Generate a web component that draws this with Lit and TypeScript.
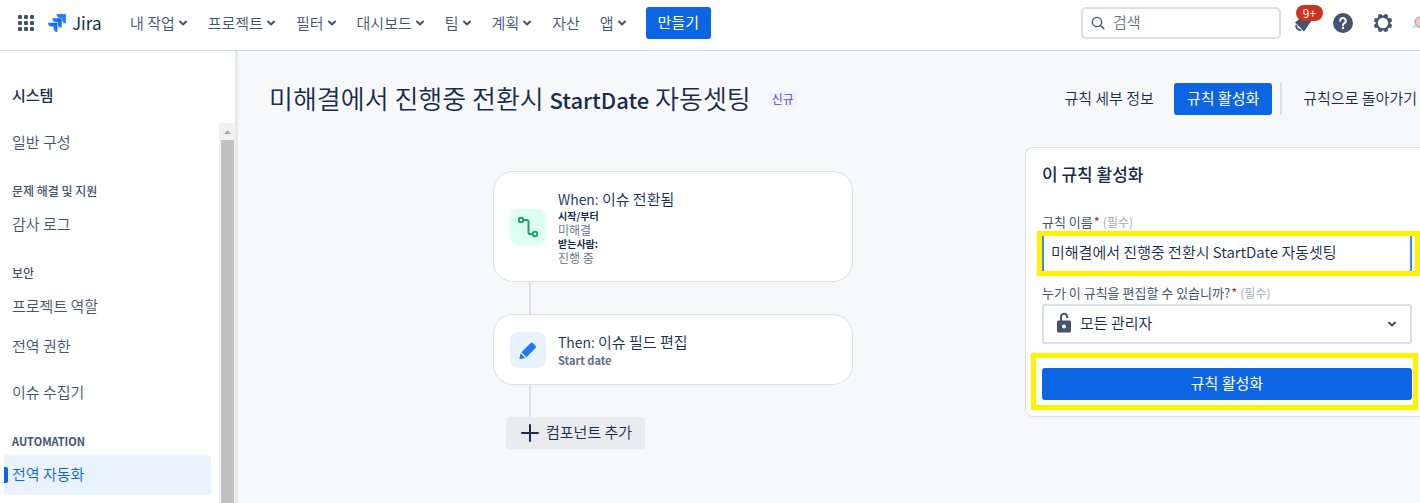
import { LitElement, html, css, svg } from "lit";
import { customElement } from "lit/decorators.js";

const chevron = html`<svg class="chev" viewBox="0 0 10 10" aria-hidden="true"><path d="M2 3.5 5 6.5 8 3.5" fill="none" stroke="currentColor" stroke-width="2" stroke-linecap="round" stroke-linejoin="round"/></svg>`;

const menus: { label: string; menu: boolean }[] = [
  { label: "내 작업", menu: true },
  { label: "프로젝트", menu: true },
  { label: "필터", menu: true },
  { label: "대시보드", menu: true },
  { label: "팀", menu: true },
  { label: "계획", menu: true },
  { label: "자산", menu: false },
  { label: "앱", menu: true },
];

@customElement("top-bar")
class TopBar extends LitElement {
  static styles = css`
    :host { display: block; }
    .bar { display: flex; align-items: center; height: 50px; padding-left: 16px; background: #fff; border-bottom: 1px solid #d8dbe3; box-sizing: content-box; color: #44546f; overflow: hidden; }
    .bar > * { flex: none; }
    button { font: inherit; color: inherit; background: none; border: 0; padding: 0; margin: 0; display: flex; align-items: center; justify-content: center; cursor: pointer; }
    .apps { width: 20px; height: 20px; margin-bottom: 4px; }
    .apps svg { width: 16px; height: 16px; }
    .logo { display: flex; align-items: center; gap: 6px; width: 52px; margin-left: 12px; margin-bottom: 4px; color: #172b4d; text-decoration: none; font-size: 17px; line-height: 24px; font-weight: 400; }
    .logo svg { width: 18px; height: 18px; flex: none; }
    nav { display: flex; align-items: center; gap: 20px; margin-left: 30px; margin-bottom: 4px; }
    nav button { gap: 3px; font-size: 15px; line-height: 32px; }
    .chev { width: 10px; height: 10px; }
    .bar .create { background: #0c66e4; color: #fff; border-radius: 3px; height: 32px; padding: 0 12px 3px; font-size: 15px; font-weight: 400; margin-left: 19px; margin-bottom: 4px; }
    .search { display: flex; align-items: center; gap: 8px; box-sizing: border-box; width: 200px; height: 32px; margin-left: auto; margin-bottom: 4px; border: 2px solid #dcdfe4; border-radius: 5px; padding: 0 8px; }
    .search svg { width: 14px; height: 14px; flex: none; }
    .search input { border: 0; outline: 0; padding: 0 0 2px; min-width: 0; flex: 1; font: inherit; font-size: 15px; line-height: 24px; background: none; color: #172b4d; }
    .search input::placeholder { color: #626f86; opacity: 1; }
    .tools { display: flex; align-items: center; margin-left: 10px; margin-bottom: 4px; }
    .tool { width: 24px; height: 24px; position: relative; margin-right: 16px; }
    .tool svg { width: 24px; height: 24px; }
    .count { position: absolute; left: 5px; top: -6px; width: 27px; height: 16px; border-radius: 8px; background: #ca3521; color: #fff; font-size: 12px; line-height: 16px; font-weight: 400; text-align: center; }
    .user { width: 9px; height: 24px; overflow: hidden; justify-content: flex-start; }
    .user svg { width: 24px; height: 24px; flex: none; }
  `;
  render() {
    return html`<header class="bar">
      <button class="apps" aria-label="앱 전환기"><svg viewBox="0 0 16 16" fill="currentColor">
        ${[0, 6, 12].map((y) => [0, 6, 12].map((x) => svg`<rect x=${x} y=${y} width="4" height="4" rx="1"/>`))}
      </svg></button>
      <a class="logo" href="#"><svg viewBox="0 0 24 24" aria-hidden="true">
        <defs>
          <linearGradient id="a" x1="1" y1="0" x2="0.4" y2="0.6"><stop offset="0.1" stop-color="#0c5fe0"/><stop offset="1" stop-color="#2684ff"/></linearGradient>
        </defs>
        <path fill="url(#a)" d="M11.571 11.513H0a5.218 5.218 0 0 0 5.232 5.215h2.130v2.057A5.215 5.215 0 0 0 12.575 24V12.518a1.005 1.005 0 0 0-1.005-1.005z"/>
        <path fill="url(#a)" d="M17.294 5.757H5.736a5.215 5.215 0 0 0 5.215 5.214h2.129v2.058a5.218 5.218 0 0 0 5.215 5.214V6.758a1.001 1.001 0 0 0-1.001-1.001z"/>
        <path fill="#2684ff" d="M23.013 0H11.455a5.215 5.215 0 0 0 5.215 5.215h2.129v2.057A5.215 5.215 0 0 0 24 12.483V1.005A1.001 1.001 0 0 0 23.013 0Z"/>
      </svg><span>Jira</span></a>
      <nav>${menus.map((m) => html`<button>${m.label}${m.menu ? chevron : ""}</button>`)}</nav>
      <button class="create">만들기</button>
      <label class="search">
        <svg viewBox="0 0 14 14" fill="none" stroke="#44546f" stroke-width="1.4" stroke-linecap="round" aria-hidden="true"><circle cx="6" cy="6" r="4.6"/><path d="m9.6 9.6 3.2 3.2"/></svg>
        <input type="text" placeholder="검색" aria-label="검색">
      </label>
      <div class="tools">
        <button class="tool" aria-label="알림"><svg viewBox="0 0 24 24" fill="currentColor"><path d="M4 11.500 12 5l9 4-8 11.500z"/><path d="M5.200 14.800a4.500 4.500 0 0 0 4 4.200" fill="none" stroke="currentColor" stroke-width="2" stroke-linecap="round"/></svg><span class="count">9+</span></button>
        <button class="tool" aria-label="도움말"><svg viewBox="0 0 24 24"><circle cx="12" cy="12" r="10" fill="currentColor"/><path d="M9.200 9.800a2.800 2.800 0 1 1 4.200 2.400c-.9.5-1.400 1-1.400 2" fill="none" stroke="#fff" stroke-width="2" stroke-linecap="round"/><circle cx="12" cy="17" r="1.200" fill="#fff"/></svg></button>
        <button class="tool" aria-label="설정"><svg viewBox="0 0 24 24"><circle cx="12" cy="12" r="6.300" fill="none" stroke="currentColor" stroke-width="2.200"/>
          ${[0, 45, 90, 135, 180, 225, 270, 315].map((r) => svg`<path fill="currentColor" transform="rotate(${r + 22.5} 12 12)" d="M9.600 5.800 10.400 2.700h3.200l.8 3.100z"/>`)}
        </svg></button>
        <button class="user" aria-label="프로필"><svg viewBox="0 0 24 24"><path d="M2 14h9v3H1z" fill="#c9efea"/><circle cx="9" cy="11" r="5" fill="#f6c5c9" stroke="#b98a94"/></svg></button>
      </div>
    </header>`;
  }
}

const groups: { title?: string; latin?: boolean; items: string[][] }[] = [
  { items: [["일반 구성"]] },
  { title: "문제 해결 및 지원", items: [["감사 로그"]] },
  { title: "보안", items: [["프로젝트 역할", "전역 권한"], ["이슈 수집기"]] },
  { title: "AUTOMATION", latin: true, items: [["전역 자동화"]] },
];

@customElement("side-nav")
class SideNav extends LitElement {
  static styles = css`
    :host { display: flex; flex-direction: column; flex: none; width: 235px; background: #fff; border-right: 3px solid #e6e8ec; overflow: hidden; }
    h2 { margin: 0; padding: 31px 12px 16px; font-size: 15px; line-height: 25px; font-weight: 500; color: #172b4d; }
    .body { display: flex; flex: 1; min-height: 0; }
    .list { flex: 1; padding: 0 8px 0 4px; overflow: hidden; }
    h3 { margin: 18px 0 4px; padding-left: 8px; font-size: 12px; line-height: 20px; font-weight: 500; color: #44546f; }
    .latin { font-size: 11px; font-weight: 700; }
    .block + .block { margin-top: 6px; }
    a { display: flex; align-items: center; box-sizing: border-box; height: 40px; padding: 0 8px 3px; border-radius: 3px; font-size: 15px; color: #44546f; text-decoration: none; position: relative; }
    .current { background: #e9f2ff; color: #0c66e4; }
    .current::before { content: ""; position: absolute; left: 0; top: 12px; width: 4px; height: 16px; background: #0c66e4; border-radius: 0 2px 2px 0; }
    .track { width: 16px; background: #f1f1f1; display: flex; flex-direction: column; }
    .track svg { width: 16px; height: 17px; }
    .thumb { flex: 1; margin: 0 1px 0 2px; background: #c1c1c1; }
  `;
  render() {
    return html`<h2>시스템</h2>
      <div class="body">
        <nav class="list">${groups.map((g) => html`
          ${g.title ? html`<h3 class=${g.latin ? "latin" : ""}>${g.title}</h3>` : ""}
          ${g.items.map((b) => html`<div class="block">${b.map((t) => html`<a href="#" class=${t === "전역 자동화" ? "current" : ""}>${t}</a>`)}</div>`)}`)}
        </nav>
        <div class="track"><svg viewBox="0 0 16 17" aria-hidden="true"><path d="M5 11 8.500 7.500 12 11z" fill="#a3a3a3"/></svg><div class="thumb"></div></div>
      </div>`;
  }
}

@customElement("rule-flow")
class RuleFlow extends LitElement {
  static styles = css`
    :host { display: flex; justify-content: center; flex: 1; padding: 24px 0 0 83px; }
    .chain { width: 360px; }
    .card { box-sizing: border-box; display: flex; align-items: center; gap: 12px; padding: 16px; background: #fff; border: 1px solid #dcdfe4; border-radius: 20px; color: #626f86; font-size: 12px; line-height: 14px; }
    .badge { width: 36px; height: 36px; border-radius: 8px; display: flex; align-items: center; justify-content: center; flex: none; }
    .badge svg { width: 24px; height: 24px; }
    .green { background: #dcfff1; color: #22a06b; }
    .blue { background: #e9f2ff; color: #1d7afc; }
    h4 { margin: 0; font-size: 15px; line-height: 21px; font-weight: 350; color: #172b4d; }
    .kind { font-size: 14px; line-height: 14px; }
    dl, dd, dt { margin: 0; }
    dt { font-size: 10px; font-weight: 700; color: #172b4d; }
    p { margin: 0; font-size: 11px; line-height: 16px; font-weight: 700; }
    .link { width: 2px; height: 32px; margin-left: 36px; background: #dcdfe4; }
    .add { display: flex; align-items: center; gap: 7px; height: 32px; padding: 0 13px 0 15px; margin-left: 13px; border: 0; border-radius: 3px; background: #e9ebee; color: #172b4d; font: inherit; font-size: 15px; cursor: pointer; }
    .add svg { width: 18px; height: 18px; }
    .add span { padding-bottom: 3px; }
  `;
  render() {
    return html`<div class="chain">
      <article class="card"><span class="badge green"><svg viewBox="0 0 24 24" fill="none" stroke="currentColor" stroke-width="2" aria-hidden="true"><circle cx="5" cy="5" r="2.200"/><circle cx="19" cy="19" r="2.200"/><path d="M7.200 5H11a1.500 1.500 0 0 1 1.500 1.500v11A1.500 1.500 0 0 0 14 19h2.800"/></svg></span>
        <div><h4><span class="kind">When:</span> 이슈 전환됨</h4><dl><dt>시작/부터</dt><dd>미해결</dd><dt>받는사람:</dt><dd>진행 중</dd></dl></div></article>
      <div class="link"></div>
      <article class="card"><span class="badge blue"><svg viewBox="0 0 24 24" fill="currentColor" aria-hidden="true"><path d="m5.400 14.200 9-9a2 2 0 0 1 2.800 0l2.200 2.200a2 2 0 0 1 0 2.800l-9 9zM4.600 15.300l4.700 4.700-5 1a.7.7 0 0 1-.8-.8z"/></svg></span>
        <div><h4><span class="kind">Then:</span> 이슈 필드 편집</h4><p>Start date</p></div></article>
      <div class="link"></div>
      <button class="add"><svg viewBox="0 0 18 18" aria-hidden="true"><path d="M9 1v16M1 9h16" stroke="currentColor" stroke-width="2" stroke-linecap="round"/></svg><span>컴포넌트 추가</span></button>
    </div>`;
  }
}

@customElement("enable-panel")
class EnablePanel extends LitElement {
  static styles = css`
    :host { display: block; flex: none; box-sizing: border-box; width: 395px; padding: 12px 8px 16px 16px; background: #fff; border: 1px solid #dcdfe4; border-right: 0; border-radius: 8px 0 0 8px; }
    h2 { margin: 0; font-size: 17px; line-height: 28px; font-weight: 500; color: #172b4d; }
    label { display: block; font-size: 13px; line-height: 16px; font-weight: 400; color: #44546f; }
    .star { color: #ae2e24; margin: 0 3px 0 1px; }
    .hint { color: #a5adba; font-size: 12px; }
    .name { margin-top: 26px; }
    .owner { margin-top: 12px; }
    .box { position: relative; margin-top: 3px; }
    input, select { display: block; box-sizing: border-box; width: 100%; height: 40px; margin: 0; border: 2px solid #388bff; border-radius: 3px; background: #fff; padding: 0 7px 3px; font: inherit; font-size: 15px; color: #172b4d; outline: 0; }
    select { appearance: none; border-color: #dcdfe4; padding: 0 36px 3px; }
    .mark { position: absolute; border: 5px solid #fff200; pointer-events: none; }
    .mark-name { inset: -2px -8px -3px -5px; }
    .mark-go { inset: -15px -6px -10px -11px; }
    .lock { position: absolute; left: 10px; top: 7px; width: 24px; height: 24px; color: #44546f; pointer-events: none; }
    .arrow { position: absolute; right: 15px; top: 15px; width: 10px; height: 10px; color: #44546f; pointer-events: none; }
    .go { position: relative; margin-top: 24px; }
    button { width: 100%; height: 32px; border: 0; border-radius: 3px; background: #0c66e4; color: #fff; font: inherit; font-size: 15px; font-weight: 400; display: block; padding: 0 0 3px; cursor: pointer; }
  `;
  render() {
    return html`<h2>이 규칙 활성화</h2>
      <label class="name" for="name">규칙 이름<span class="star">*</span><span class="hint">(필수)</span></label>
      <div class="box"><input id="name" type="text" .value=${"미해결에서 진행중 전환시 StartDate 자동셋팅"}><div class="mark mark-name"></div></div>
      <label class="owner" for="owner">누가 이 규칙을 편집할 수 있습니까?<span class="star">*</span><span class="hint">(필수)</span></label>
      <div class="box"><select id="owner"><option>모든 관리자</option></select>
        <svg class="lock" viewBox="0 0 24 24" aria-hidden="true"><rect x="5" y="9.500" width="14" height="12" rx="1.500" fill="currentColor"/><circle cx="12" cy="15.500" r="2" fill="#fff"/><path d="M9 10V6a3.100 3.100 0 0 1 6.200-.3V7" fill="none" stroke="currentColor" stroke-width="2"/></svg>
        <svg class="arrow" viewBox="0 0 10 10" aria-hidden="true"><path d="M2 3.500 5 6.500 8 3.500" fill="none" stroke="currentColor" stroke-width="2" stroke-linecap="round" stroke-linejoin="round"/></svg></div>
      <div class="go"><button>규칙 활성화</button><div class="mark mark-go"></div></div>`;
  }
}

@customElement("app-root")
class AppRoot extends LitElement {
  static styles = css`
    :host { display: flex; flex-direction: column; height: 100vh; overflow: hidden; background: #f7f8f9; font-family: "Noto Sans CJK KR", "Noto Sans", sans-serif; font-size: 15px; font-weight: 350; color: #172b4d; }
    top-bar { flex: none; }
    .page { display: flex; flex: 1; min-height: 0; }
    main { flex: 1; min-width: 0; }
    .head { display: flex; align-items: center; height: 32px; padding: 32px 3px 32px 31px; }
    h1 { margin: 0; padding-bottom: 2px; font-size: 26px; line-height: 30px; font-weight: 350; white-space: nowrap; }
    h1 b { font-size: 22px; font-weight: 500; }
    .new { margin-left: 17px; padding: 0 4px; border-radius: 3px; background: #f3f0ff; color: #5e4db2; font-size: 12px; line-height: 16px; font-weight: 400; }
    .actions { display: flex; align-items: center; margin-left: auto; white-space: nowrap; }
    button { height: 32px; border: 0; padding: 0 0 3px; background: none; color: inherit; font: inherit; font-size: 15px; cursor: pointer; }
    .actions .primary { background: #0c66e4; color: #fff; font-weight: 400; border-radius: 3px; padding: 0 13px 3px; margin: 0 8px 0 20px; }
    .bar { width: 2px; height: 32px; background: #dcdfe4; margin-right: 21px; }
    .work { display: flex; align-items: flex-start; }
  `;
  render() {
    return html`<top-bar></top-bar>
      <div class="page">
        <side-nav></side-nav>
        <main>
          <div class="head">
            <h1>미해결에서 진행중 전환시 <b>StartDate</b> 자동셋팅</h1><span class="new">신규</span>
            <div class="actions"><button>규칙 세부 정보</button><button class="primary">규칙 활성화</button><span class="bar"></span><button>규칙으로 돌아가기</button></div>
          </div>
          <div class="work"><rule-flow></rule-flow><enable-panel></enable-panel></div>
        </main>
      </div>`;
  }
}
